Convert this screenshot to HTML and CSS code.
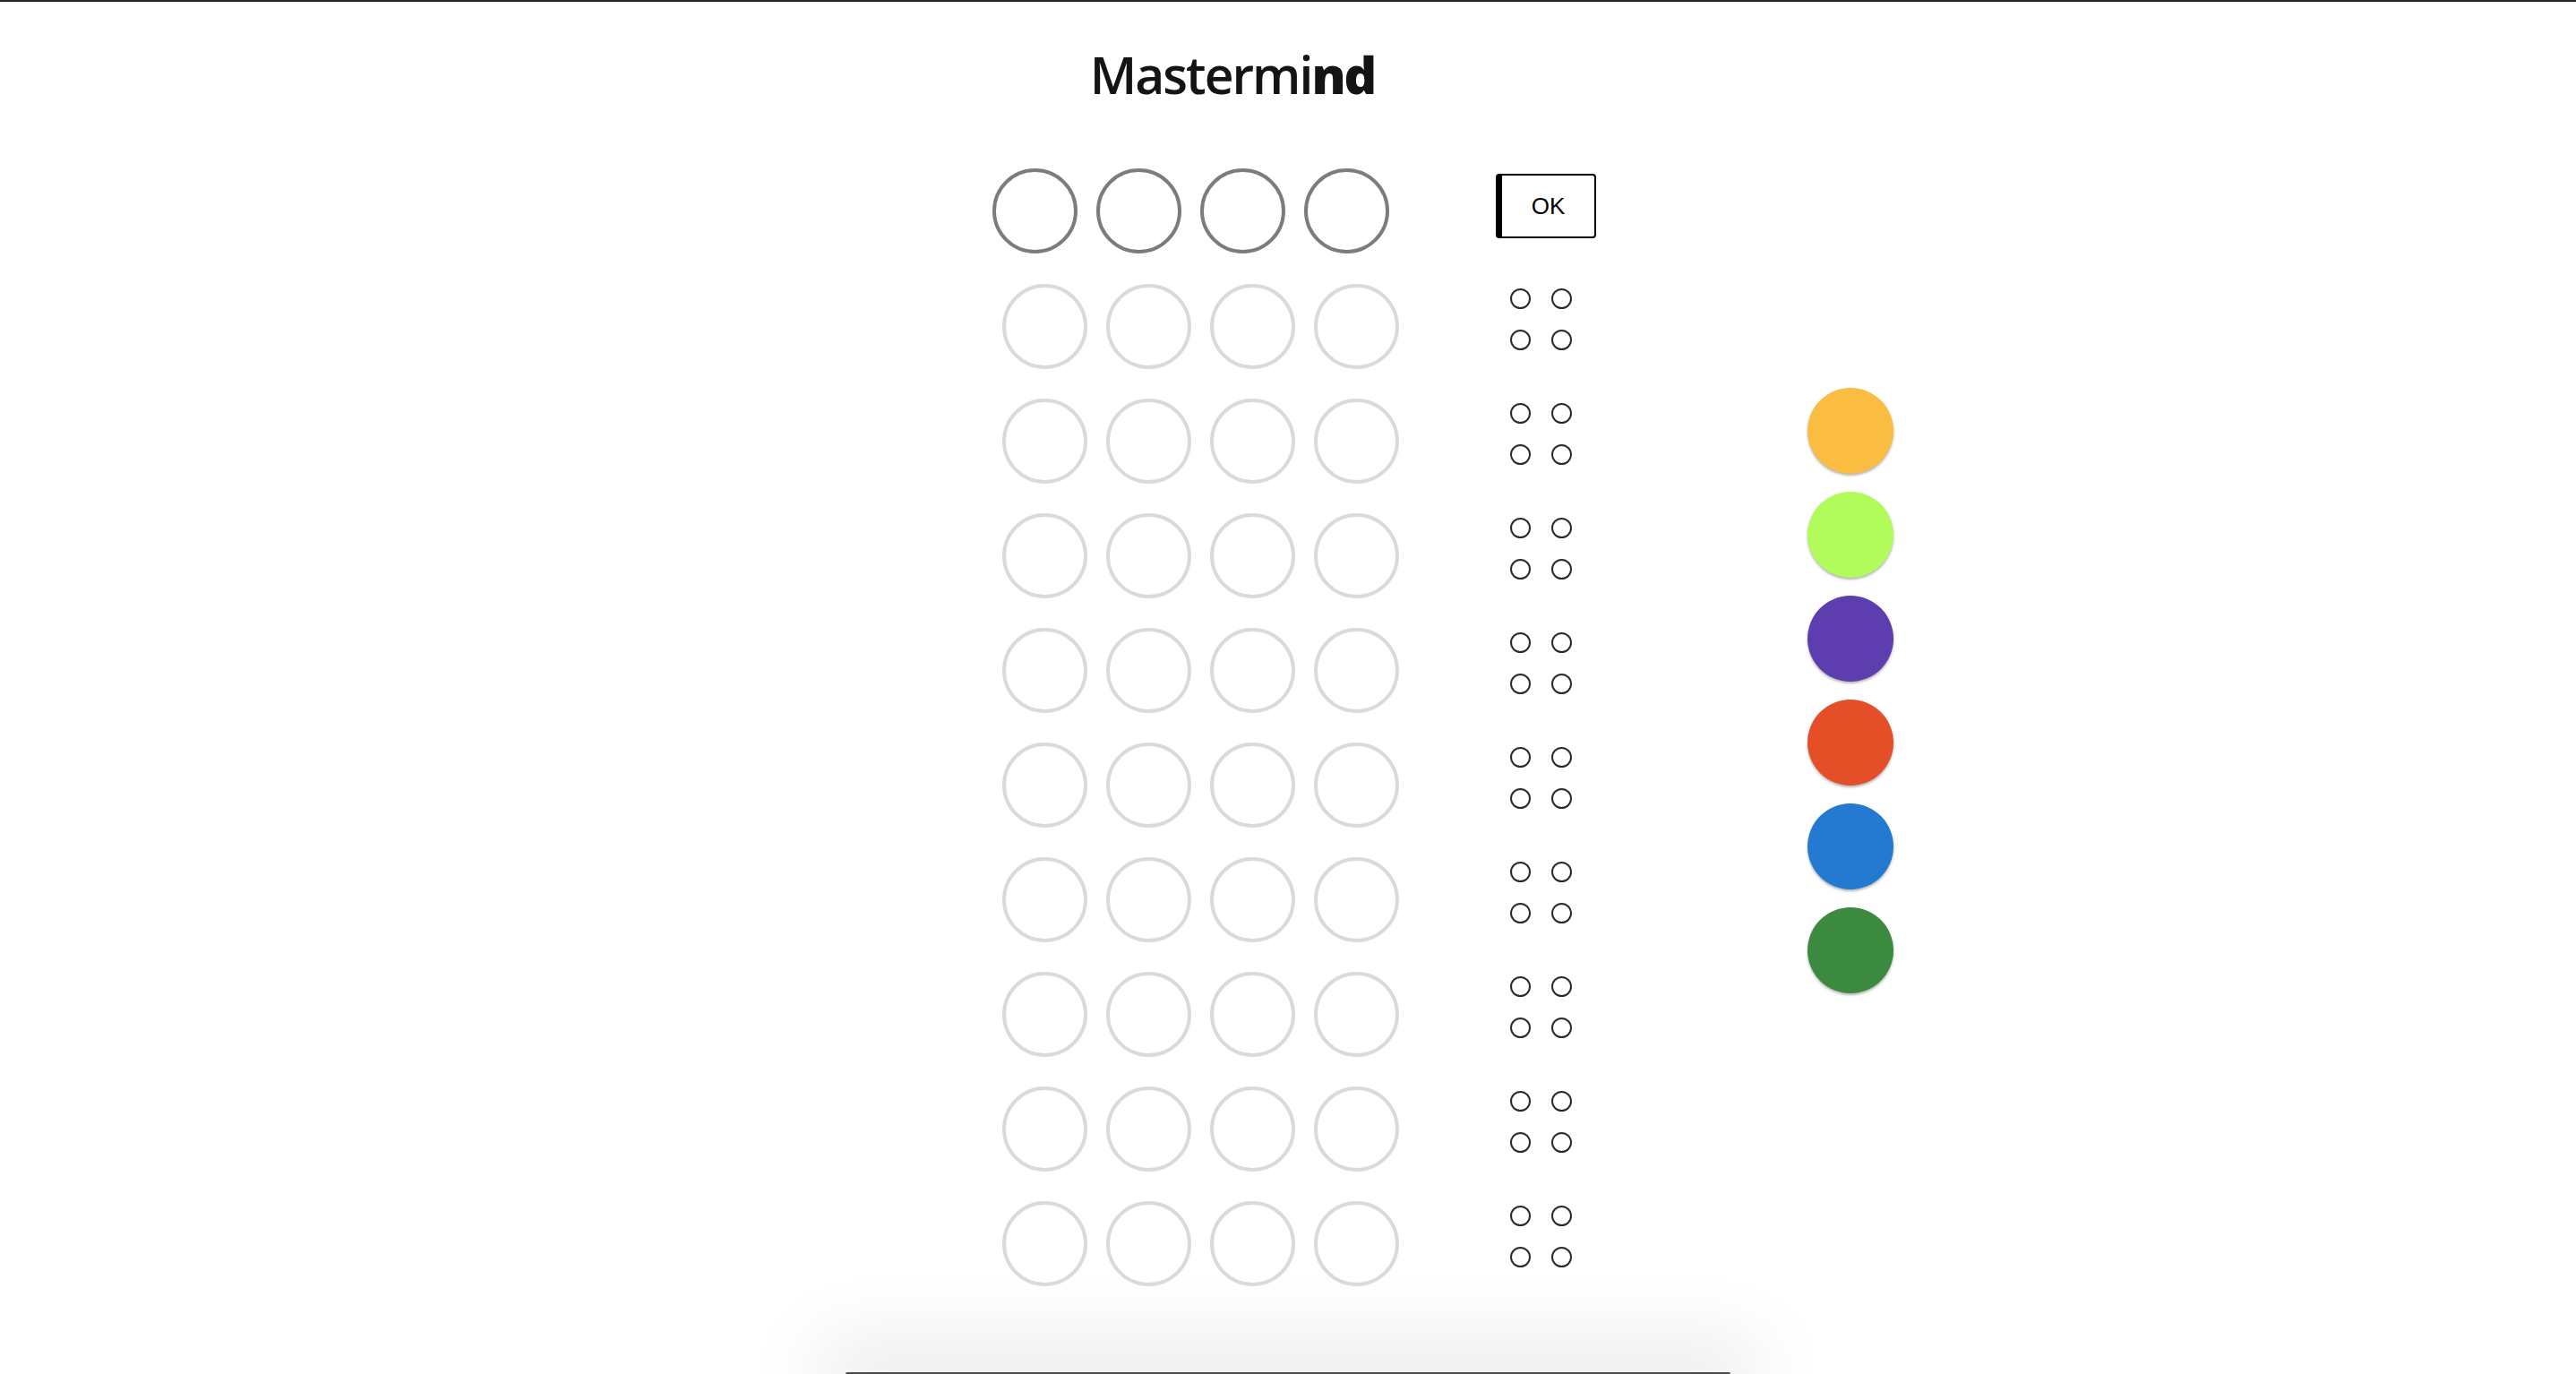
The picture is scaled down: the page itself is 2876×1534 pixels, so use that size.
FILE: index.html
```html
<!DOCTYPE html>
<html lang="en">
<head>
<meta charset="utf-8">
<title>Mastermind</title>
<link rel="stylesheet" href="styles.css">
</head>
<body>
<h1 class="title">Mastermi<span class="title-bold">nd</span></h1>
<main class="game">
  <section class="board">
    <div class="guess-row">
      <div class="slots">
        <div class="slot slot-active"></div>
        <div class="slot slot-active"></div>
        <div class="slot slot-active"></div>
        <div class="slot slot-active"></div>
      </div>
      <button class="ok-button" type="button">OK</button>
    </div>
    <div class="row"><div class="slots"><div class="slot"></div><div class="slot"></div><div class="slot"></div><div class="slot"></div></div><div class="pegs"><span class="peg"></span><span class="peg"></span><span class="peg"></span><span class="peg"></span></div></div>
    <div class="row"><div class="slots"><div class="slot"></div><div class="slot"></div><div class="slot"></div><div class="slot"></div></div><div class="pegs"><span class="peg"></span><span class="peg"></span><span class="peg"></span><span class="peg"></span></div></div>
    <div class="row"><div class="slots"><div class="slot"></div><div class="slot"></div><div class="slot"></div><div class="slot"></div></div><div class="pegs"><span class="peg"></span><span class="peg"></span><span class="peg"></span><span class="peg"></span></div></div>
    <div class="row"><div class="slots"><div class="slot"></div><div class="slot"></div><div class="slot"></div><div class="slot"></div></div><div class="pegs"><span class="peg"></span><span class="peg"></span><span class="peg"></span><span class="peg"></span></div></div>
    <div class="row"><div class="slots"><div class="slot"></div><div class="slot"></div><div class="slot"></div><div class="slot"></div></div><div class="pegs"><span class="peg"></span><span class="peg"></span><span class="peg"></span><span class="peg"></span></div></div>
    <div class="row"><div class="slots"><div class="slot"></div><div class="slot"></div><div class="slot"></div><div class="slot"></div></div><div class="pegs"><span class="peg"></span><span class="peg"></span><span class="peg"></span><span class="peg"></span></div></div>
    <div class="row"><div class="slots"><div class="slot"></div><div class="slot"></div><div class="slot"></div><div class="slot"></div></div><div class="pegs"><span class="peg"></span><span class="peg"></span><span class="peg"></span><span class="peg"></span></div></div>
    <div class="row"><div class="slots"><div class="slot"></div><div class="slot"></div><div class="slot"></div><div class="slot"></div></div><div class="pegs"><span class="peg"></span><span class="peg"></span><span class="peg"></span><span class="peg"></span></div></div>
    <div class="row"><div class="slots"><div class="slot"></div><div class="slot"></div><div class="slot"></div><div class="slot"></div></div><div class="pegs"><span class="peg"></span><span class="peg"></span><span class="peg"></span><span class="peg"></span></div></div>
  </section>
  <aside class="palette">
    <div class="color color-yellow"></div>
    <div class="color color-lime"></div>
    <div class="color color-purple"></div>
    <div class="color color-red"></div>
    <div class="color color-blue"></div>
    <div class="color color-green"></div>
  </aside>
</main>
<footer class="drawer"></footer>
</body>
</html>
```

FILE: styles.css
```css
html {
  overflow: hidden;
  background: #ffffff;
}

body {
  margin: 0;
  border-top: 2px solid #262626;
  font-family: "Liberation Sans", Arial, sans-serif;
  color: #111111;
  background: #ffffff;
}

.title {
  margin: 53px 0 0;
  padding-right: 124px;
  text-align: center;
  font-family: "Open Sans", "Noto Sans", sans-serif;
  font-weight: 600;
  font-size: 57px;
  line-height: 57px;
  height: 57px;
  color: #141414;
  letter-spacing: -2px;
}

.title-bold {
  font-weight: 800;
}

.game {
  display: flex;
  align-items: flex-start;
  margin-top: 76px;
  margin-left: calc(50% - 330px);
}

.board {
  width: 676px;
  display: flex;
  flex-direction: column;
  gap: 33px;
}

.guess-row {
  display: flex;
  align-items: flex-start;
  height: 95px;
  margin-bottom: 1px;
}

.slots {
  display: flex;
  gap: 21px;
}

.slot {
  box-sizing: border-box;
  width: 95px;
  height: 95px;
  border-radius: 50%;
  border: 4px solid #dadada;
  background: #ffffff;
}

.slot-active {
  border-color: #7c7c7c;
}

.ok-button {
  box-sizing: border-box;
  margin: 6px 0 0 119px;
  width: 112px;
  height: 72px;
  padding: 0;
  background: #ffffff;
  border: 2px solid #000000;
  border-left-width: 7px;
  border-radius: 4px;
  font-family: "Liberation Sans", Arial, sans-serif;
  font-size: 26px;
  color: #000000;
}

.row {
  display: flex;
  align-items: flex-start;
  height: 95px;
  padding-left: 11px;
}

.pegs {
  display: grid;
  grid-template-columns: 23px 23px;
  grid-auto-rows: 23px;
  column-gap: 23px;
  row-gap: 23px;
  margin: 5px 0 0 124px;
}

.peg {
  box-sizing: border-box;
  width: 23px;
  height: 23px;
  border-radius: 50%;
  border: 2px solid #2b2b2b;
}

.palette {
  display: flex;
  flex-direction: column;
  gap: 20px;
  margin: 245px 0 0 234px;
}

.color {
  width: 96px;
  height: 96px;
  border-radius: 50%;
  box-shadow: 0 2px 3px rgba(0, 0, 0, 0.3);
}

.color-yellow { background: #fbbd41; }
.color-lime { background: #b1fc5a; }
.color-purple { background: #5e3dae; }
.color-red { background: #e44f28; }
.color-blue { background: #2479d1; }
.color-green { background: #3b8a3f; }

.drawer {
  width: 988px;
  height: 0;
  margin: 96px auto 0;
  border-top: 2px solid #4a4a4a;
  border-radius: 4px 4px 0 0;
  background: #ffffff;
  box-shadow: 0 0 90px 30px rgba(0, 0, 0, 0.1);
}
```
